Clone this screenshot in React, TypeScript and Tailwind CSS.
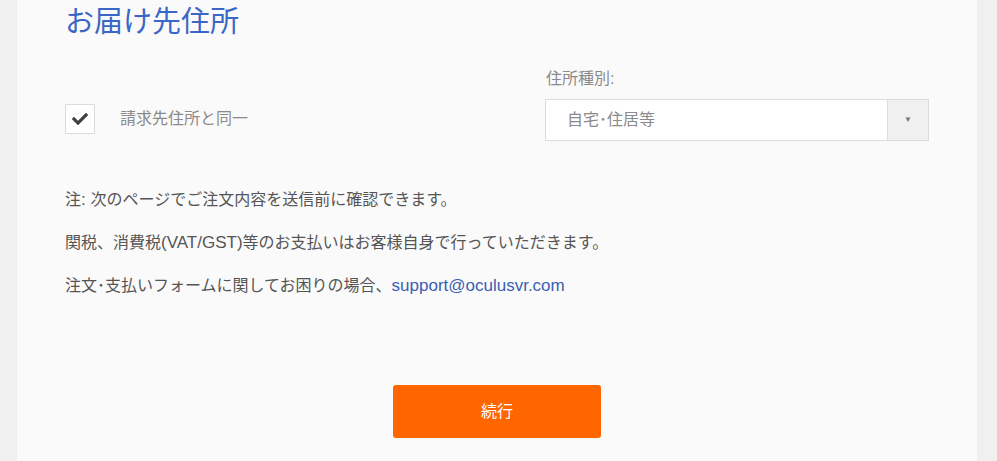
import { FaCheck } from 'react-icons/fa';

export default function App() {
  return (
    <div
      className="min-h-[461px] w-full bg-[#f0f0f0] overflow-hidden"
      style={{ fontFamily: '"Liberation Sans", "Noto Sans CJK JP", sans-serif' }}
    >
      <div className="ml-[17px] w-[960px] min-h-[461px] bg-[#fafafa] px-[48px] pt-[3px]">
        {/* Heading */}
        <h1 className="text-[29px] leading-[38px] text-[#3a66c6]">お届け先住所</h1>

        {/* Checkbox + address type */}
        <div className="flex justify-between mt-[29px]">
          <div className="flex items-center gap-[25px] pt-[34px] self-start">
            <div className="w-[30px] h-[30px] bg-white border border-[#dcdcdc] flex items-center justify-center">
              <FaCheck className="w-[16px] h-[16px] text-[#404040]" />
            </div>
            <span className="text-[16px] text-[#8a8a8a]">請求先住所と同一</span>
          </div>

          <div className="w-[384px]">
            <label className="block text-[16px] leading-[18px] text-[#8a8a8a] ml-[1px]">住所種別:</label>
            <div className="mt-[11px] h-[42px] flex bg-white border border-[#dcdcdc]">
              <div className="flex-1 flex items-center pl-[21px] text-[16px] text-[#8a8a8a]">自宅･住居等</div>
              <div className="w-[41px] bg-[#f0f0f0] border-l border-[#dcdcdc] flex items-center justify-center">
                <span className="text-[8px] text-[#777]">▼</span>
              </div>
            </div>
          </div>
        </div>

        {/* Notes */}
        <div className="mt-[49px] text-[16px] text-[#555] flex flex-col gap-[23px] leading-[20px]">
          <p>
            注<span className="text-[17px]">: </span>次のページでご注文内容を送信前に確認できます。
          </p>
          <p>
            関税、消費税<span className="text-[17px]">(VAT/GST)</span>等のお支払いはお客様自身で行っていただきます。
          </p>
          <p>
            注文･支払いフォームに関してお困りの場合、
            <a className="text-[17px] text-[#3a5fb2]">support@oculusvr.com</a>
          </p>
        </div>

        {/* Continue */}
        <div className="flex justify-center mt-[89px]">
          <button className="w-[208px] h-[53px] rounded-[3px] bg-[#ff6600] text-white text-[16px]">続行</button>
        </div>
      </div>
    </div>
  );
}
